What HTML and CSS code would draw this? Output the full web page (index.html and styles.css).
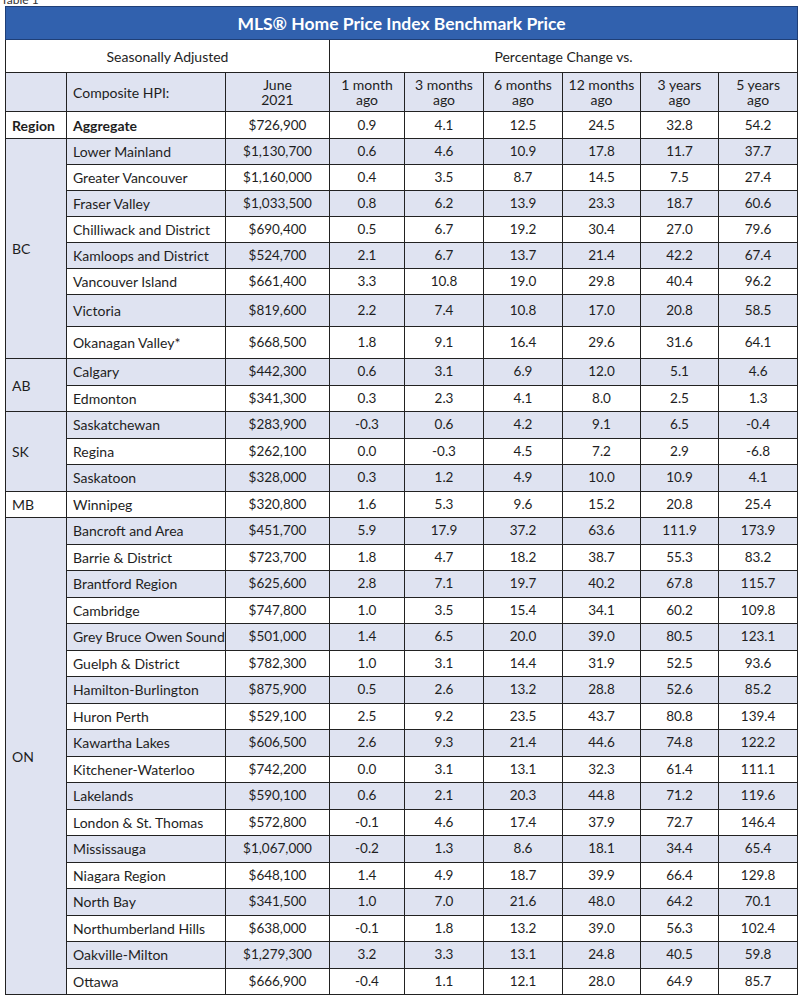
FILE: index.html
```html
<!DOCTYPE html>
<html>
<head>
<meta charset="utf-8">
<link rel="stylesheet" href="styles.css">
</head>
<body>
<div class="page">
  <div class="caption">Table 1</div>
  <table class="hpi">
    <colgroup>
      <col class="c-reg"><col class="c-name"><col class="c-price">
      <col class="c1"><col class="c3"><col class="c6"><col class="c12"><col class="cy3"><col class="cy5">
    </colgroup>
    <thead>
      <tr class="title-row"><th colspan="9">MLS® Home Price Index Benchmark Price</th></tr>
      <tr class="group-row"><th colspan="3">Seasonally Adjusted</th><th colspan="6">Percentage Change vs.</th></tr>
      <tr class="head-row">
        <th></th><th class="name">Composite HPI:</th><th>June<br>2021</th>
        <th>1 month<br>ago</th><th>3 months<br>ago</th><th>6 months<br>ago</th><th>12 months<br>ago</th><th>3 years<br>ago</th><th>5 years<br>ago</th>
      </tr>
    </thead>
    <tbody>
      <tr class="agg"><td class="reg bold">Region</td><td class="name bold">Aggregate</td><td>$726,900</td><td>0.9</td><td>4.1</td><td>12.5</td><td>24.5</td><td>32.8</td><td>54.2</td></tr>

      <tr class="sh"><td class="reg shade" rowspan="8">BC</td><td class="name">Lower Mainland</td><td>$1,130,700</td><td>0.6</td><td>4.6</td><td>10.9</td><td>17.8</td><td>11.7</td><td>37.7</td></tr>
      <tr><td class="name">Greater Vancouver</td><td>$1,160,000</td><td>0.4</td><td>3.5</td><td>8.7</td><td>14.5</td><td>7.5</td><td>27.4</td></tr>
      <tr class="sh"><td class="name">Fraser Valley</td><td>$1,033,500</td><td>0.8</td><td>6.2</td><td>13.9</td><td>23.3</td><td>18.7</td><td>60.6</td></tr>
      <tr><td class="name">Chilliwack and District</td><td>$690,400</td><td>0.5</td><td>6.7</td><td>19.2</td><td>30.4</td><td>27.0</td><td>79.6</td></tr>
      <tr class="sh"><td class="name">Kamloops and District</td><td>$524,700</td><td>2.1</td><td>6.7</td><td>13.7</td><td>21.4</td><td>42.2</td><td>67.4</td></tr>
      <tr><td class="name">Vancouver Island</td><td>$661,400</td><td>3.3</td><td>10.8</td><td>19.0</td><td>29.8</td><td>40.4</td><td>96.2</td></tr>
      <tr class="sh tall"><td class="name">Victoria</td><td>$819,600</td><td>2.2</td><td>7.4</td><td>10.8</td><td>17.0</td><td>20.8</td><td>58.5</td></tr>
      <tr class="tall"><td class="name">Okanagan Valley*</td><td>$668,500</td><td>1.8</td><td>9.1</td><td>16.4</td><td>29.6</td><td>31.6</td><td>64.1</td></tr>

      <tr class="sh mid"><td class="reg" rowspan="2">AB</td><td class="name">Calgary</td><td>$442,300</td><td>0.6</td><td>3.1</td><td>6.9</td><td>12.0</td><td>5.1</td><td>4.6</td></tr>
      <tr class="mid"><td class="name">Edmonton</td><td>$341,300</td><td>0.3</td><td>2.3</td><td>4.1</td><td>8.0</td><td>2.5</td><td>1.3</td></tr>

      <tr class="sh mid"><td class="reg shade" rowspan="3">SK</td><td class="name">Saskatchewan</td><td>$283,900</td><td>-0.3</td><td>0.6</td><td>4.2</td><td>9.1</td><td>6.5</td><td>-0.4</td></tr>
      <tr class="mid"><td class="name">Regina</td><td>$262,100</td><td>0.0</td><td>-0.3</td><td>4.5</td><td>7.2</td><td>2.9</td><td>-6.8</td></tr>
      <tr class="sh mid"><td class="name">Saskatoon</td><td>$328,000</td><td>0.3</td><td>1.2</td><td>4.9</td><td>10.0</td><td>10.9</td><td>4.1</td></tr>

      <tr class="mid"><td class="reg">MB</td><td class="name">Winnipeg</td><td>$320,800</td><td>1.6</td><td>5.3</td><td>9.6</td><td>15.2</td><td>20.8</td><td>25.4</td></tr>

      <tr class="sh mid"><td class="reg shade" rowspan="18">ON</td><td class="name">Bancroft and Area</td><td>$451,700</td><td>5.9</td><td>17.9</td><td>37.2</td><td>63.6</td><td>111.9</td><td>173.9</td></tr>
      <tr class="mid"><td class="name">Barrie &amp; District</td><td>$723,700</td><td>1.8</td><td>4.7</td><td>18.2</td><td>38.7</td><td>55.3</td><td>83.2</td></tr>
      <tr class="sh mid"><td class="name">Brantford Region</td><td>$625,600</td><td>2.8</td><td>7.1</td><td>19.7</td><td>40.2</td><td>67.8</td><td>115.7</td></tr>
      <tr class="mid"><td class="name">Cambridge</td><td>$747,800</td><td>1.0</td><td>3.5</td><td>15.4</td><td>34.1</td><td>60.2</td><td>109.8</td></tr>
      <tr class="sh mid"><td class="name">Grey Bruce Owen Sound</td><td>$501,000</td><td>1.4</td><td>6.5</td><td>20.0</td><td>39.0</td><td>80.5</td><td>123.1</td></tr>
      <tr class="mid"><td class="name">Guelph &amp; District</td><td>$782,300</td><td>1.0</td><td>3.1</td><td>14.4</td><td>31.9</td><td>52.5</td><td>93.6</td></tr>
      <tr class="sh mid"><td class="name">Hamilton-Burlington</td><td>$875,900</td><td>0.5</td><td>2.6</td><td>13.2</td><td>28.8</td><td>52.6</td><td>85.2</td></tr>
      <tr class="mid"><td class="name">Huron Perth</td><td>$529,100</td><td>2.5</td><td>9.2</td><td>23.5</td><td>43.7</td><td>80.8</td><td>139.4</td></tr>
      <tr class="sh mid"><td class="name">Kawartha Lakes</td><td>$606,500</td><td>2.6</td><td>9.3</td><td>21.4</td><td>44.6</td><td>74.8</td><td>122.2</td></tr>
      <tr class="mid"><td class="name">Kitchener-Waterloo</td><td>$742,200</td><td>0.0</td><td>3.1</td><td>13.1</td><td>32.3</td><td>61.4</td><td>111.1</td></tr>
      <tr class="sh mid"><td class="name">Lakelands</td><td>$590,100</td><td>0.6</td><td>2.1</td><td>20.3</td><td>44.8</td><td>71.2</td><td>119.6</td></tr>
      <tr class="mid"><td class="name">London &amp; St. Thomas</td><td>$572,800</td><td>-0.1</td><td>4.6</td><td>17.4</td><td>37.9</td><td>72.7</td><td>146.4</td></tr>
      <tr class="sh mid"><td class="name">Mississauga</td><td>$1,067,000</td><td>-0.2</td><td>1.3</td><td>8.6</td><td>18.1</td><td>34.4</td><td>65.4</td></tr>
      <tr class="mid"><td class="name">Niagara Region</td><td>$648,100</td><td>1.4</td><td>4.9</td><td>18.7</td><td>39.9</td><td>66.4</td><td>129.8</td></tr>
      <tr class="sh mid"><td class="name">North Bay</td><td>$341,500</td><td>1.0</td><td>7.0</td><td>21.6</td><td>48.0</td><td>64.2</td><td>70.1</td></tr>
      <tr class="mid"><td class="name">Northumberland Hills</td><td>$638,000</td><td>-0.1</td><td>1.8</td><td>13.2</td><td>39.0</td><td>56.3</td><td>102.4</td></tr>
      <tr class="sh mid"><td class="name">Oakville-Milton</td><td>$1,279,300</td><td>3.2</td><td>3.3</td><td>13.1</td><td>24.8</td><td>40.5</td><td>59.8</td></tr>
      <tr class="mid"><td class="name">Ottawa</td><td>$666,900</td><td>-0.4</td><td>1.1</td><td>12.1</td><td>28.0</td><td>64.9</td><td>85.7</td></tr>
    </tbody>
  </table>
</div>
</body>
</html>
```

FILE: styles.css
```css
html, body {
  margin: 0;
  padding: 0;
  background: #ffffff;
}
body {
  font-family: Lato, "Noto Sans", "Liberation Sans", sans-serif;
  color: #1e1e1e;
  overflow: hidden;
}
.page {
  padding-left: 5px;
  width: 792px;
}
.caption {
  font-size: 12px;
  line-height: 12px;
  height: 12px;
  margin-top: -6px;
  color: #333;
  margin-left: -5px;
  padding-left: 1px;
  white-space: nowrap;
}
.hpi {
  border-collapse: collapse;
  table-layout: fixed;
  width: 792px;
  font-size: 13.5px;
}
.c-reg { width: 61px; }
.c-name { width: 159px; }
.c-price { width: 104px; }
.c1 { width: 75px; }
.c3 { width: 79px; }
.c6 { width: 79px; }
.c12 { width: 78px; }
.cy3 { width: 78px; }
.cy5 { width: 79px; }

.hpi th, .hpi td {
  border: 1px solid #222;
  padding: 0 4px;
  text-align: center;
  vertical-align: middle;
  font-weight: normal;
  line-height: 15px;
  white-space: nowrap;
}
.title-row th {
  background: #3161ae;
  color: #ffffff;
  font-weight: bold;
  font-size: 17.5px;
  height: 32px;
  padding: 0;
  border-color: #1f3f77;
}
.group-row th {
  height: 32px;
  font-size: 14px;
  background: #fff;
}
.head-row th {
  background: #dfe3f1;
  height: 38px;
  font-size: 14px;
}
.hpi .head-row th.name {
  text-align: left;
  padding-left: 6px;
}
.hpi td {
  height: 25px;
}
.hpi tr.agg td { height: 26px; }
.hpi tr.mid td { height: 25.5px; }
.hpi tr.tall td { height: 31px; }
.hpi tr.sh td { background: #dfe3f1; }
.hpi td.name {
  text-align: left;
  padding-left: 6px;
  padding-right: 2px;
  font-size: 14px;
}
.hpi td.reg {
  text-align: left;
  padding-left: 6px;
  font-size: 14px;
  background: #ffffff;
}
.hpi td.reg.shade { background: #dfe3f1; }
.hpi td.bold { font-weight: bold; }
```
